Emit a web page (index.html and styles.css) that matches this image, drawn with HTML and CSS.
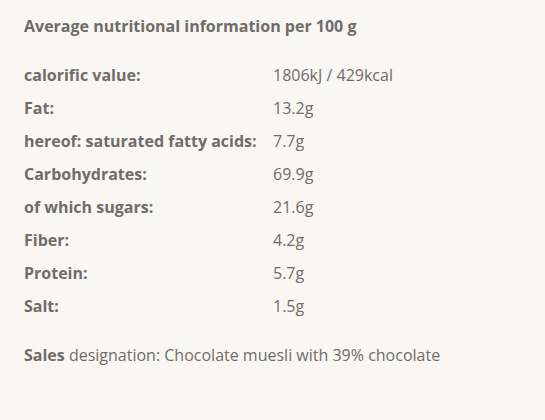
FILE: index.html
```html
<!DOCTYPE html>
<html lang="en">
<head>
    <meta charset="UTF-8">
    <meta name="viewport" content="width=device-width, initial-scale=1.0">
    <title>Nutritional information</title>
    <link rel="stylesheet" href="styles.css">
</head>
<body>

<div class="nutrition">
    <h3>Average nutritional information per 100 g</h3>

    <table class="nutrition-table">
        <tr><th>calorific value:</th><td>1806kJ / 429kcal</td></tr>
        <tr><th>Fat:</th><td>13.2g</td></tr>
        <tr><th>hereof: saturated fatty acids:</th><td>7.7g</td></tr>
        <tr><th>Carbohydrates:</th><td>69.9g</td></tr>
        <tr><th>of which sugars:</th><td>21.6g</td></tr>
        <tr><th>Fiber:</th><td>4.2g</td></tr>
        <tr><th>Protein:</th><td>5.7g</td></tr>
        <tr><th>Salt:</th><td>1.5g</td></tr>
    </table>

    <p class="designation"><strong>Sales</strong> designation: Chocolate muesli with 39% chocolate</p>
</div>

</body>
</html>
```

FILE: styles.css
```css
body {
    margin: 0;
    background-color: #f9f7f3;
    color: #6f6c6a;
    font-family: "Open Sans", Arial, sans-serif;
    font-size: 16px;
}
.nutrition {
    padding: 15px 24px;
}
h3 {
    margin: 0 0 21px;
    font-size: 16px;
    font-weight: 700;
    line-height: 22px;
}
.nutrition-table {
    border-collapse: collapse;
}
.nutrition-table th {
    width: 249px;
    padding: 0;
    height: 33px;
    text-align: left;
    font-weight: 700;
}
.nutrition-table td {
    padding: 0;
    height: 33px;
}
.designation {
    margin: 22px 0 0;
    line-height: 22px;
}
```
